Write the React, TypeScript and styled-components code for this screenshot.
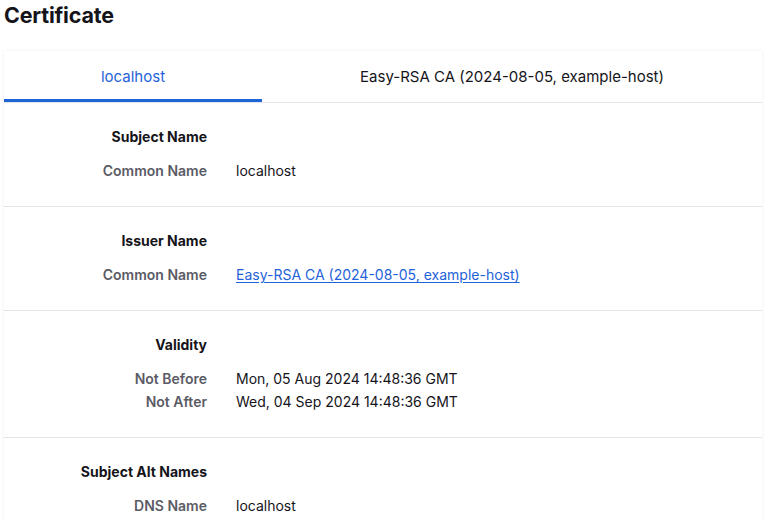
import React from "react";
import styled, { createGlobalStyle } from "styled-components";

const Global = createGlobalStyle`
  html, body { margin: 0; padding: 0; background: #fff; }
  body { font-family: Inter, "Noto Sans", sans-serif; color: #15141a; }
`;

const Page = styled.div`
  padding: 0 3px 0 4px;
`;

const Title = styled.h1`
  margin: 0;
  height: 33px;
  font-size: 21.5px;
  font-weight: 700;
  line-height: 30px;
  letter-spacing: -0.2px;
`;

const Card = styled.div`
  margin-top: 18px;
  background: #fff;
  box-shadow: 0 0 3px rgba(0, 0, 0, 0.08);
`;

const Tabs = styled.div`
  display: flex;
  border-bottom: 1px solid #e4e4e7;
`;

const Tab = styled.div<{ $active?: boolean; $w?: number }>`
  ${(p) => (p.$w ? `width: ${p.$w}px;` : "flex: 1;")}
  height: 46px;
  display: flex;
  align-items: center;
  justify-content: center;
  font-size: 15px;
  color: ${(p) => (p.$active ? "#1f63d8" : "#15141a")};
  border-bottom: 3px solid ${(p) => (p.$active ? "#1f63d8" : "transparent")};
  padding-top: 2px;
  box-sizing: content-box;
`;

const Section = styled.section`
  padding: 22px 0 24px;
  border-bottom: 1px solid #e4e4e7;
  display: grid;
  grid-template-columns: 203px 1fr;
  column-gap: 29px;
  align-content: start;
`;

const Heading = styled.div`
  grid-column: 1;
  text-align: right;
  font-size: 14px;
  font-weight: 700;
  line-height: 23px;
  margin-bottom: 11px;
`;

const Label = styled.div`
  grid-column: 1;
  text-align: right;
  font-size: 14px;
  font-weight: 600;
  line-height: 23px;
  color: #5b5b66;
`;

const Value = styled.div`
  grid-column: 2;
  font-size: 14px;
  line-height: 23px;
  color: #15141a;
`;

const Link = styled.a`
  color: #1f63d8;
  text-decoration: underline;
  text-underline-offset: 2px;
`;

type Row = { label: string; value: React.ReactNode };

const sections: { title: string; rows: Row[] }[] = [
  { title: "Subject Name", rows: [{ label: "Common Name", value: "localhost" }] },
  {
    title: "Issuer Name",
    rows: [
      {
        label: "Common Name",
        value: <Link href="#">Easy-RSA CA (2024-08-05, example-host)</Link>,
      },
    ],
  },
  {
    title: "Validity",
    rows: [
      { label: "Not Before", value: "Mon, 05 Aug 2024 14:48:36 GMT" },
      { label: "Not After", value: "Wed, 04 Sep 2024 14:48:36 GMT" },
    ],
  },
  { title: "Subject Alt Names", rows: [{ label: "DNS Name", value: "localhost" }] },
];

export default function App() {
  return (
    <Page>
      <Global />
      <Title>Certificate</Title>
      <Card>
        <Tabs>
          <Tab $active $w={258}>localhost</Tab>
          <Tab>Easy-RSA CA (2024-08-05, example-host)</Tab>
        </Tabs>
        {sections.map((s) => (
          <Section key={s.title}>
            <Heading>{s.title}</Heading>
            {s.rows.map((r, i) => (
              <React.Fragment key={i}>
                <Label>{r.label}</Label>
                <Value>{r.value}</Value>
              </React.Fragment>
            ))}
          </Section>
        ))}
      </Card>
    </Page>
  );
}
